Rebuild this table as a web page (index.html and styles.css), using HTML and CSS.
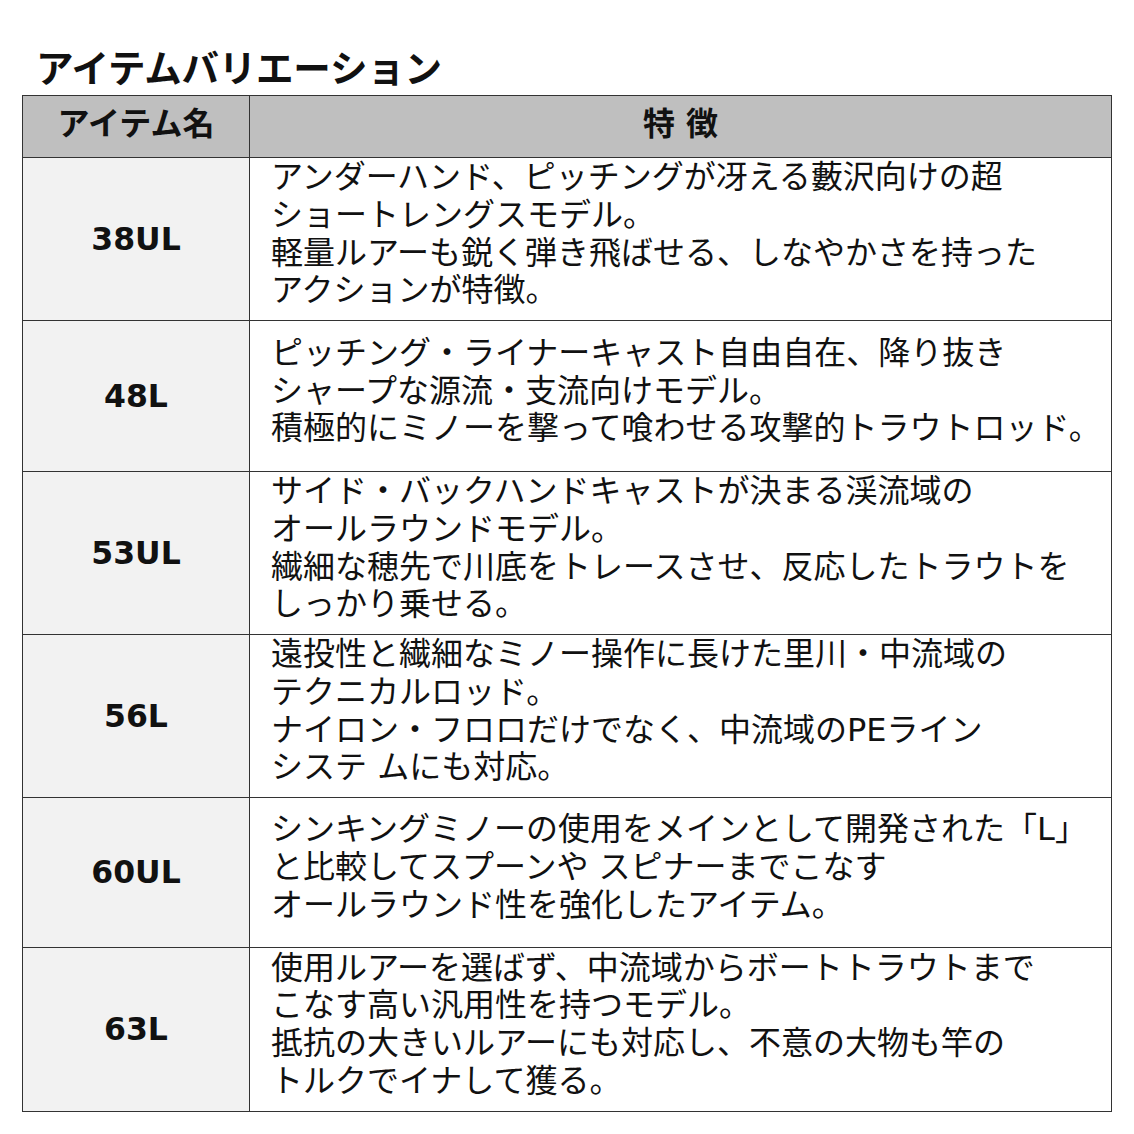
FILE: index.html
```html
<!DOCTYPE html>
<html lang="ja">
<head>
<meta charset="utf-8">
<link rel="stylesheet" href="styles.css">
</head>
<body>
<div class="page">
  <h1 class="title">アイテムバリエーション</h1>
  <table class="items">
    <colgroup><col class="c-name"><col class="c-feat"></colgroup>
    <thead>
      <tr class="r-head"><th class="h-name">アイテム名</th><th class="h-feat">特 徴</th></tr>
    </thead>
    <tbody>
      <tr class="r4"><td class="name">38UL</td><td class="feat"><div class="txt">アンダーハンド、ピッチングが冴える藪沢向けの超<br>ショートレングスモデル。<br>軽量ルアーも鋭く弾き飛ばせる、しなやかさを持った<br>アクションが特徴。</div></td></tr>
      <tr class="r3"><td class="name">48L</td><td class="feat"><div class="txt">ピッチング・ライナーキャスト自由自在、降り抜き<br>シャープな源流・支流向けモデル。<br>積極的にミノーを撃って喰わせる攻撃的トラウトロッド。</div></td></tr>
      <tr class="r4"><td class="name">53UL</td><td class="feat"><div class="txt">サイド・バックハンドキャストが決まる渓流域の<br>オールラウンドモデル。<br>繊細な穂先で川底をトレースさせ、反応したトラウトを<br>しっかり乗せる。</div></td></tr>
      <tr class="r4"><td class="name">56L</td><td class="feat"><div class="txt">遠投性と繊細なミノー操作に長けた里川・中流域の<br>テクニカルロッド。<br>ナイロン・フロロだけでなく、中流域のPEライン<br>システ ムにも対応。</div></td></tr>
      <tr class="r3b"><td class="name">60UL</td><td class="feat"><div class="txt">シンキングミノーの使用をメインとして開発された「L」<br>と比較してスプーンや スピナーまでこなす<br>オールラウンド性を強化したアイテム。</div></td></tr>
      <tr class="r4b"><td class="name">63L</td><td class="feat"><div class="txt">使用ルアーを選ばず、中流域からボートトラウトまで<br>こなす高い汎用性を持つモデル。<br>抵抗の大きいルアーにも対応し、不意の大物も竿の<br>トルクでイナして獲る。</div></td></tr>
    </tbody>
  </table>
</div>
</body>
</html>
```
FILE: styles.css
```css
html, body {
  margin: 0;
  padding: 0;
  background: #ffffff;
}
body {
  font-family: "DejaVu Sans", "Noto Sans CJK JP", sans-serif;
  color: #111111;
}
.page {
  width: 1134px;
  height: 1134px;
  padding: 47px 0 0 22px;
  box-sizing: border-box;
}
.title {
  margin: 0 0 11px 14px;
  font-family: "Noto Sans CJK JP", sans-serif;
  font-weight: 700;
  font-size: 37.5px;
  line-height: 37px;
  letter-spacing: -0.2px;
}
.items {
  width: 1090px;
  border-collapse: collapse;
  table-layout: fixed;
  border: 1px solid #333333;
}
.c-name { width: 227px; }
.items th,
.items td {
  border: 1px solid #333333;
  padding: 0;
}
.r-head th {
  height: 62px;
  background: #bfbfbf;
  font-family: "DejaVu Sans", "Noto Sans CJK JP", sans-serif;
  font-weight: 700;
  font-size: 32px;
  line-height: 32px;
  text-align: center;
  vertical-align: middle;
  padding-bottom: 6px;
  box-sizing: border-box;
}
.h-name { font-family: "Noto Sans CJK JP", sans-serif; }
.r4 td { height: 162px; }
.r3 td { height: 150px; }
.r3b td { height: 149px; }
.r4b td { height: 163px; }
.name {
  background: #f2f2f2;
  text-align: center;
  vertical-align: middle;
  font-weight: 700;
  font-size: 31.5px;
  line-height: 31px;
}
.feat {
  vertical-align: middle;
  background: #ffffff;
}
.txt {
  padding: 0 0 9px 21px;
  font-size: 32px;
  line-height: 37.7px;
  white-space: nowrap;
}
```
